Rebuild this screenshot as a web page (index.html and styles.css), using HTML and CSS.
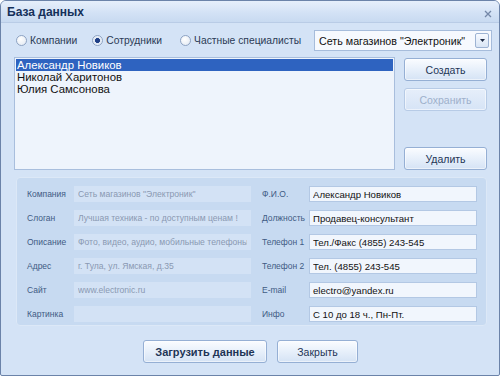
FILE: index.html
```html
<!DOCTYPE html>
<html lang="ru">

<head>
  <meta charset="UTF-8">
  <meta name="viewport" content="width=device-width, initial-scale=1.0">
  <title>База данных</title>

  <link rel="stylesheet" href="styles.css">
</head>

<body>
  <div class="window">
    <header class="titlebar">
      <span class="title">База данных</span>
      <svg class="close" width="8" height="8" viewBox="0 0 8 8">
        <path d="M1 1L7 7M7 1L1 7" stroke="#7488a8" stroke-width="1.3" />
      </svg>
    </header>

    <div class="content">
      <div class="filter-row">
        <label class="radio"><input type="radio" name="kind"> Компании</label>
        <label class="radio radio-wide"><input type="radio" name="kind" checked> Сотрудники</label>
        <label class="radio"><input type="radio" name="kind"> Частные специалисты</label>
        <div class="combo">
          <span class="combo-text">Сеть магазинов "Электроник"</span>
          <span class="combo-btn">
            <svg width="5" height="3" viewBox="0 0 5 3"><path d="M0 0H5L2.5 3Z" fill="#1c2a44" /></svg>
          </span>
        </div>
      </div>

      <div class="main-row">
        <ul class="list">
          <li class="selected">Александр Новиков</li>
          <li>Николай Харитонов</li>
          <li>Юлия Самсонова</li>
        </ul>
        <div class="actions">
          <button class="btn">Создать</button>
          <button class="btn" disabled>Сохранить</button>
          <button class="btn btn-bottom">Удалить</button>
        </div>
      </div>

      <section class="details">
        <div class="col col-left">
          <div class="row"><span class="lbl">Компания</span><input class="field ro" readonly value='Сеть магазинов "Электроник"'></div>
          <div class="row"><span class="lbl">Слоган</span><input class="field ro" readonly value="Лучшая техника - по доступным ценам !"></div>
          <div class="row"><span class="lbl">Описание</span><input class="field ro" readonly value="Фото, видео, аудио, мобильные телефоны"></div>
          <div class="row"><span class="lbl">Адрес</span><input class="field ro" readonly value="г. Тула, ул. Ямская, д.35"></div>
          <div class="row"><span class="lbl">Сайт</span><input class="field ro" readonly value="www.electronic.ru"></div>
          <div class="row"><span class="lbl">Картинка</span><input class="field ro" readonly value=""></div>
        </div>
        <div class="col col-right">
          <div class="row"><span class="lbl">Ф.И.О.</span><input class="field" value="Александр Новиков"></div>
          <div class="row"><span class="lbl">Должность</span><input class="field" value="Продавец-консультант"></div>
          <div class="row"><span class="lbl">Телефон 1</span><input class="field" value="Тел./Факс (4855) 243-545"></div>
          <div class="row"><span class="lbl">Телефон 2</span><input class="field" value="Тел. (4855) 243-545"></div>
          <div class="row"><span class="lbl">E-mail</span><input class="field" value="electro@yandex.ru"></div>
          <div class="row"><span class="lbl">Инфо</span><input class="field" value="С 10 до 18 ч., Пн-Пт."></div>
        </div>
      </section>

      <div class="footer">
        <button class="btn btn-load">Загрузить данные</button>
        <button class="btn btn-close">Закрыть</button>
      </div>
    </div>
  </div>
</body>

</html>
```

FILE: styles.css
```css
* {
  box-sizing: border-box;
}

body {
  margin: 0;
  font-family: "Liberation Sans", Arial, sans-serif;
  font-size: 11px;
  color: #1a1a1a;
}

.window {
  width: 500px;
  height: 376px;
  background: #d4e3f6;
  border: 1px solid #6b83a9;
  border-radius: 6px 6px 2px 2px;
  display: flex;
  flex-direction: column;
  overflow: hidden;
}

.titlebar {
  height: 22px;
  flex: none;
  display: flex;
  align-items: center;
  justify-content: space-between;
  padding: 0 7px 0 6px;
  background: linear-gradient(#e6effb, #d2e1f5 60%, #c8daf1);
  border-bottom: 1px solid #b9cce6;
}

.title {
  font-weight: bold;
  font-size: 12px;
  color: #15305a;
}

.close {
  margin-top: 4px;
}

.content {
  flex: 1;
  display: flex;
  flex-direction: column;
  padding: 7px 12px 0 13px;
}

.filter-row {
  display: flex;
  align-items: center;
  height: 21px;
  white-space: nowrap;
}

.radio {
  display: flex;
  align-items: center;
  gap: 3px;
  margin-right: 13px;
  font-size: 10.3px;
  color: #2b3a55;
}

.radio-wide {
  margin-right: 16px;
}

.radio input {
  appearance: none;
  width: 11px;
  height: 11px;
  margin: 0 0 0 2px;
  border: 1px solid #8ea3c3;
  border-radius: 50%;
  background: radial-gradient(circle at 40% 35%, #ffffff, #dfe7f1);
}

.radio input:checked {
  background: radial-gradient(circle, #1f3f86 0 2.2px, #dde6f3 2.8px, #ffffff);
}

.combo {
  flex: none;
  margin-left: auto;
  width: 178px;
  height: 21px;
  display: flex;
  align-items: center;
  justify-content: space-between;
  background: #f6f9fe;
  border: 1px solid #a6bcdb;
  padding: 0 2px 0 4px;
  font-size: 10.7px;
  color: #111;
}

.combo-btn {
  width: 14px;
  height: 15px;
  display: flex;
  align-items: center;
  justify-content: center;
  border: 1px solid #9db3d3;
  border-radius: 2px;
  background: linear-gradient(#f7faff, #d9e5f5);
}

.main-row {
  display: flex;
  gap: 9px;
  margin-top: 6px;
  height: 113px;
}

.list {
  flex: 1;
  margin: 0;
  padding: 1px;
  list-style: none;
  background: #eef4fc;
  border: 1px solid #a8bedd;
}

.list li {
  height: 12px;
  line-height: 12px;
  padding-left: 1px;
  font-size: 11.4px;
  color: #111;
}

.list li.selected {
  background: #2e63c0;
  color: #fff;
}

.actions {
  width: 83px;
  display: flex;
  flex-direction: column;
  gap: 7px;
  padding-top: 1px;
}

.btn {
  height: 23px;
  margin: 0;
  font-family: inherit;
  font-size: 10.5px;
  color: #1e3556;
  background: linear-gradient(#fafcff, #e9f1fb 45%, #d5e3f5);
  border: 1px solid #95afd4;
  border-radius: 3px;
  box-shadow: inset 0 0 0 1px #ffffff88;
}

.btn:disabled {
  color: #9eb0cb;
  border-color: #b7cbe6;
  background: linear-gradient(#e6eefa, #d6e4f6);
}

.btn-bottom {
  margin-top: auto;
}

.details {
  margin: 7px 0 0 2px;
  height: 149px;
  display: flex;
  padding: 8px 9px 0 10px;
  background: #c7daf1;
  border: 1px solid #dce8f7;
  border-radius: 4px;
}

.col {
  display: flex;
  flex-direction: column;
  gap: 8px;
}

.col-left {
  width: 224px;
}

.col-right {
  margin-left: auto;
  width: 215px;
}

.row {
  display: flex;
  align-items: center;
  height: 16px;
}

.lbl {
  width: 47px;
  color: #3f5a84;
  font-size: 8.5px;
  white-space: nowrap;
}

.field {
  flex: 1;
  height: 16px;
  margin: 0;
  padding: 0 3px;
  font-family: inherit;
  font-size: 9.6px;
  color: #111;
  background: #f1f6fd;
  border: 1px solid #b3c8e4;
  outline: none;
}

.field.ro {
  font-size: 8.6px;
  color: #8a99b2;
  background: #d3e2f5;
  border-color: #d3e2f5;
}

.footer {
  display: flex;
  justify-content: center;
  gap: 10px;
  margin-top: 14px;
}

.btn-load {
  width: 124px;
  font-weight: bold;
  font-size: 11px;
}

.btn-close {
  width: 81px;
}
```
